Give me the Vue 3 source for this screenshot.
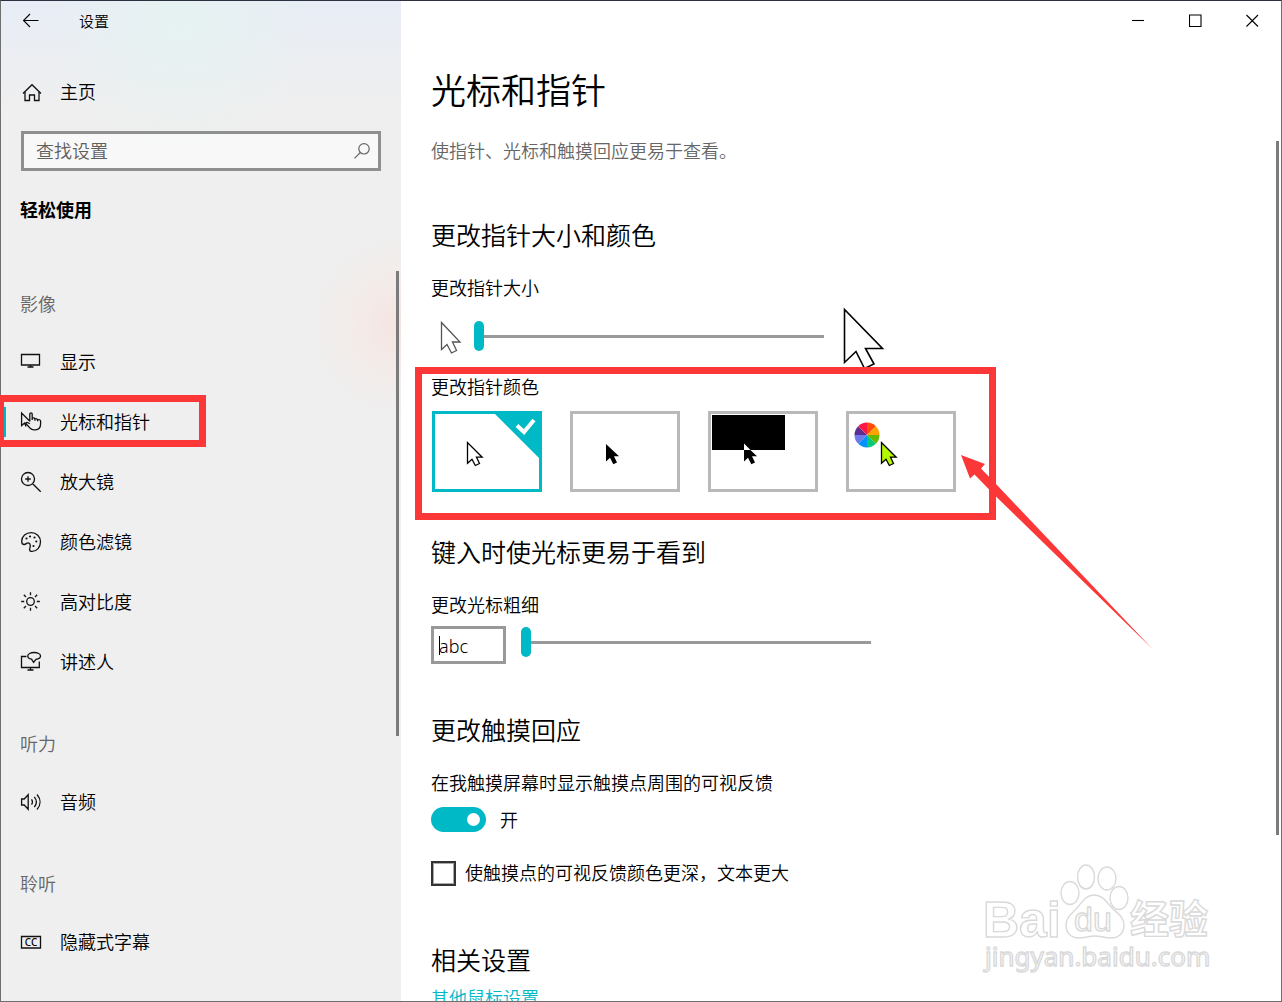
<script setup>
import { ref } from 'vue';

const search = ref('')
const active = ref('cursor')
const pointerSize = ref(0)
const pointerColor = ref('white')
const caretWidth = ref(0)
const sample = ref('abc')
const touchFeedback = ref(true)
const darkerFeedback = ref(false)

const groups = [
    {
        title: '影像',
        items: [
            { id: 'display', text: '显示' },
            { id: 'cursor', text: '光标和指针' },
            { id: 'magnifier', text: '放大镜' },
            { id: 'filters', text: '颜色滤镜' },
            { id: 'contrast', text: '高对比度' },
            { id: 'narrator', text: '讲述人' }
        ]
    },
    {
        title: '听力',
        items: [{ id: 'audio', text: '音频' }]
    },
    {
        title: '聆听',
        items: [{ id: 'captions', text: '隐藏式字幕' }]
    }
]

const icons = {
    display: 'M1.5 3.5h18v10.5h-18z M10.5 14v2 M7.5 16h6',
    cursor: 'M6 15.5 4.6 12 1.6 14.6V2l8 8 M9.8 10.5V3a1.2 1.2 0 0 1 2.4 0V9 M12.2 7.3c1-.8 2.6-.5 2.7.7v1.7 M14.9 8c1-.6 2.6-.3 2.7 1v1.2 M17.6 8.8c1.3-.6 2.9 0 3 1.3v3c0 3.2-1.8 5.7-5.2 5.7h-1.6c-1.5 0-2.6-.6-3.6-1.6L5.7 12.4c.8-1.4 2.6-1.1 4.1.5',
    magnifier: 'M14.5 8a6.5 6.5 0 1 1-13 0 6.5 6.5 0 0 1 13 0z M12.7 12.7l8 8 M8 5.2v5.6 M5.2 8h5.6',
    filters: 'M1.7 10.5C1.7 5.3 6 1.6 11.2 1.6s9.3 4 9.3 9.2c0 5.3-3.6 9.6-8.5 9.6-1.8 0-2.9-1-2.3-2.6.8-2.3 1.2-5.6-1.5-5.9-1.6-.2-2.2 1.6-4 1.6-1.7 0-2.5-1.3-2.5-3z',
    contrast: 'M14.3 10.5a3.8 3.8 0 1 1-7.6 0 3.8 3.8 0 0 1 7.6 0z M10.5 1.2v3 M10.5 16.8v3 M1.2 10.5h3 M16.8 10.5h3 M3.8 3.8 6 6 M15 15l2.2 2.2 M17.2 3.8 15 6 M6 15l-2.2 2.2',
    narrator: 'M6.5 5.5h-5v11h17.8v-6 M10.5 16.5v2.5 M7.5 19h6 M11.5 8.2C9.3 7.8 7.8 6.6 7.8 5c0-2 2.8-3.5 6.3-3.5s6.4 1.5 6.4 3.5c0 1.7-1.9 3-4.6 3.4l-2.3 3z',
    audio: 'M1.6 8h2.6l4-4.3v14.6l-4-4.3H1.6z M11.5 8.3c1.2 1.7 1.2 3.7 0 5.4 M14.3 5.8c2.6 3.2 2.6 7.2 0 10.4 M17 3.5c4 4.6 4 10.4 0 15',
    captions: 'M1.5 5.5h19v11.5h-19z'
}

// centres of the paint wells on the palette
const wells = [[6.5, 7.5], [10, 5.5], [14.5, 6.5], [16.3, 10.5], [13.5, 15]]

const colors = [
    { id: 'white', text: '白色' },
    { id: 'black', text: '黑色' },
    { id: 'inverted', text: '反转' },
    { id: 'custom', text: '自定义' }
]

const outlinePointer = 'M32.5 28.5V49.2L37 45.2l3.3 6.3 4.2-2-3-6.3h5.7z'
const solidPointer = 'M33 30v17.5l4-3.8 3.3 6.5 3.7-1.7-3-6.2h5z'

const wheel = ['#ff4b05', '#ffa200', '#66b800', '#00ca76', '#0094fb', '#7179ea', '#5d2e91', '#fc1745']

function slice(i) {
    const point = n => {
        const a = n * Math.PI / 4
        return `${18 + 12.5 * Math.sin(a)} ${21 - 12.5 * Math.cos(a)}`
    }
    return `M18 21L${point(i)}A12.5 12.5 0 0 1 ${point(i + 1)}z`
}
</script>

<template>
    <div class="window">
        <aside class="sidebar">
            <header class="titlebar">
                <button class="back" aria-label="返回">
                    <svg width="16" height="16" viewBox="0 0 16 16"><path d="M.5 7.5h15 M7 1 .5 7.5 7 14" /></svg>
                </button>
                <span>设置</span>
            </header>

            <a class="nav-item home" href="#home">
                <svg width="22" height="22" viewBox="0 0 22 22">
                    <path d="M3 12.5 12 3.7l9 8.8 M5 11v8.5h4.5V14h5v5.5H19V11" />
                </svg>
                <span>主页</span>
            </a>

            <div class="search">
                <input v-model="search" type="text" placeholder="查找设置" aria-label="查找设置" />
                <svg width="16" height="16" viewBox="0 0 16 16">
                    <circle cx="10" cy="5.8" r="5.2" /><path d="M6.3 9.5.5 15.3" />
                </svg>
            </div>

            <h2 class="category">轻松使用</h2>

            <nav class="nav">
                <section v-for="group in groups" :key="group.title">
                    <h3>{{ group.title }}</h3>
                    <a
                        v-for="item in group.items"
                        :key="item.id"
                        class="nav-item"
                        :class="{ active: item.id === active }"
                        :href="'#' + item.id"
                        @click="active = item.id"
                    >
                        <svg width="22" height="22" viewBox="0 0 22 22">
                            <path :d="icons[item.id]" />
                            <template v-if="item.id === 'filters'">
                                <circle v-for="w in wells" :key="w[0]" class="well" :cx="w[0]" :cy="w[1]" r="1.1" />
                            </template>
                            <text v-if="item.id === 'captions'" x="11" y="15" text-anchor="middle">CC</text>
                        </svg>
                        <span>{{ item.text }}</span>
                        <i v-if="item.id === 'cursor'" class="mark mark-nav"></i>
                    </a>
                </section>
                <i class="scroll-thumb"></i>
            </nav>
        </aside>

        <main class="content">
            <header class="titlebar controls">
                <button aria-label="最小化"><svg width="13" height="13" viewBox="0 0 13 13"><path d="M0 6.5h12" /></svg></button>
                <button aria-label="最大化"><svg width="13" height="13" viewBox="0 0 13 13"><path d="M.5 1h11.5v11.5H.5z" /></svg></button>
                <button aria-label="关闭"><svg width="13" height="13" viewBox="0 0 13 13"><path d="M.5 1l11.5 11.5 M12 1 .5 12.5" /></svg></button>
            </header>

            <h1>光标和指针</h1>
            <p class="intro">使指针、光标和触摸回应更易于查看。</p>

            <section>
                <h2>更改指针大小和颜色</h2>
                <label class="caption" for="pointer-size">更改指针大小</label>
                <div class="size-row">
                    <svg class="small-pointer" width="22" height="38" viewBox="0 0 22 38">
                        <path d="M1.5 5.5v27l5.5-5 4.5 8.5 5-2.5-4-8.5h7.5z" />
                    </svg>
                    <input id="pointer-size" v-model="pointerSize" type="range" min="0" max="14" />
                    <svg class="big-pointer" width="42" height="68" viewBox="0 0 42 68">
                        <path d="M1.5 7.500v53l11.500-11 8.500 17 9.500-4.500-8.500-15.500h17z" />
                    </svg>
                </div>

                <div class="color-block">
                    <p id="color-label" class="caption">更改指针颜色</p>
                    <div class="swatches" role="radiogroup" aria-labelledby="color-label">
                        <label v-for="c in colors" :key="c.id" class="swatch" :class="{ selected: c.id === pointerColor }">
                            <input v-model="pointerColor" type="radio" name="color" :value="c.id" :aria-label="c.text" />
                            <svg width="104" height="75" viewBox="0 0 104 75">
                                <path v-if="c.id === 'white'" :d="outlinePointer" fill="#fff" stroke="#000" stroke-width="1.3" />
                                <path v-if="c.id === 'black'" :d="solidPointer" />
                                <template v-if="c.id === 'inverted'">
                                    <rect x="1" y="1" width="73" height="35" />
                                    <path :d="solidPointer" />
                                    <path d="M33 29.5V36h6.5z" fill="#fff" />
                                </template>
                                <template v-if="c.id === 'custom'">
                                    <path v-for="(fill, i) in wheel" :key="fill" :d="slice(i)" :fill="fill" />
                                    <path :d="outlinePointer" fill="#b5f800" stroke="#000" stroke-width="1.3" />
                                </template>
                                <template v-if="c.id === pointerColor">
                                    <path d="M60 0h44v44z" fill="#00b9c6" />
                                    <path d="M82 11.5l7 6.5L99 6" fill="none" stroke="#fff" stroke-width="4" />
                                </template>
                            </svg>
                        </label>
                    </div>
                    <i class="mark mark-colors"></i>
                    <svg class="arrow" width="194" height="196" viewBox="0 0 194 196">
                        <path d="M1 1l24 9-4 4.5 15 15.5L193 195.5 36 42.5 14.5 20.5 10 24.5z" />
                    </svg>
                </div>
            </section>

            <section class="caret-section">
                <h2>键入时使光标更易于看到</h2>
                <label class="caption" for="caret-width">更改光标粗细</label>
                <div class="caret-row">
                    <div class="sample">
                        <input v-model="sample" type="text" aria-label="预览" />
                        <i></i>
                    </div>
                    <input id="caret-width" v-model="caretWidth" type="range" min="0" max="19" />
                </div>
            </section>

            <section class="touch-section">
                <h2>更改触摸回应</h2>
                <label class="caption" for="touch">在我触摸屏幕时显示触摸点周围的可视反馈</label>
                <div class="toggle-row">
                    <input id="touch" v-model="touchFeedback" class="toggle" type="checkbox" role="switch" />
                    <span>{{ touchFeedback ? '开' : '关' }}</span>
                </div>
                <label class="check-row">
                    <input v-model="darkerFeedback" class="check" type="checkbox" />
                    <span>使触摸点的可视反馈颜色更深，文本更大</span>
                </label>
            </section>

            <section class="related">
                <h2>相关设置</h2>
                <a href="#mouse">其他鼠标设置</a>
            </section>

            <i class="scroll-thumb"></i>

            <svg class="watermark" width="236" height="120" viewBox="0 0 236 120">
                <text x="3" y="77" class="wm-bai">Bai</text>
                <ellipse cx="90" cy="33" rx="9" ry="11.5" />
                <ellipse cx="106" cy="17" rx="8.5" ry="12" />
                <ellipse cx="127" cy="18.5" rx="9" ry="11.5" />
                <ellipse cx="139" cy="38" rx="9" ry="11.5" />
                <path d="M114 35c9 0 13 8 19 14 6 5 11 9 11 16 0 8-5 13-13 13-6 0-10-2-16-2s-10 2-16 2c-8 0-13-5-13-13 0-7 5-11 10-16 6-6 9-14 18-14z" />
                <text x="94" y="71" class="wm-du">du</text>
                <text x="150" y="73" class="wm-cn">经验</text>
                <text x="5" y="106" class="wm-url">jingyan.baidu.com</text>
            </svg>
        </main>
    </div>
</template>

<style>
body {
    margin: 0;
    background: #fff;
}
</style>

<style scoped>
* {
    box-sizing: border-box;
}

.window {
    position: relative;
    display: grid;
    grid-template-columns: 401px 1fr;
    height: 100vh;
    overflow: hidden;
    color: #000;
    background: #fff;
    font-family: "Noto Sans", "Noto Sans CJK SC", sans-serif;
    font-size: 18px;
    font-weight: 350;
    line-height: 24px;
}

.window::after {
    content: "";
    position: absolute;
    inset: 0;
    border: 1px solid #6f6f6f;
    border-top-color: #2c3040;
    pointer-events: none;
}

h1, h2, h3, p {
    margin: 0;
    font-weight: 350;
}

button {
    padding: 0;
    border: none;
    background: none;
}

svg {
    display: block;
    flex: none;
}

.titlebar {
    display: flex;
    align-items: center;
    height: 41px;
    font-size: 15px;
}

.titlebar path {
    fill: none;
    stroke: #000;
    stroke-width: 1.1;
}

/* sidebar */
.sidebar {
    display: flex;
    flex-direction: column;
    min-height: 0;
    background:
        radial-gradient(circle at 400px 325px, #f5e3e1 0, rgba(245, 234, 230, 0.7) 45px, rgba(239, 239, 239, 0) 90px),
        radial-gradient(circle at 180px 20px, rgba(230, 243, 241, 0.9), rgba(236, 240, 241, 0) 130px),
        linear-gradient(#e8edf6 0, #efefef 110px);
}

.back {
    width: 16px;
    margin: 0 40px 0 23px;
}

.nav-item {
    position: relative;
    display: flex;
    align-items: center;
    gap: 18px;
    height: 60px;
    padding-left: 20px;
    color: #000;
    text-decoration: none;
}

.nav-item path {
    fill: none;
    stroke: #111;
    stroke-width: 1.3;
}

.nav-item text {
    font-family: "Noto Sans", sans-serif;
    font-size: 10px;
    font-weight: 500;
}

.well {
    fill: #111;
}

.home {
    margin-top: 21px;
}

.search {
    display: flex;
    align-items: center;
    height: 40px;
    margin: 9px 20px 0 21px;
    padding: 0 8px 0 12px;
    border: 3px solid #8f8f8f;
    background: rgba(255, 255, 255, 0.55);
}

.search input {
    flex: 1;
    min-width: 0;
    padding: 0;
    border: none;
    outline: none;
    background: none;
    font: inherit;
}

.search input::placeholder {
    color: #5f5f5f;
    opacity: 1;
}

.search svg {
    fill: none;
    stroke: #666;
    stroke-width: 1.2;
}

.category {
    margin: 19px 0 22px 20px;
    font-size: 18px;
    font-weight: 700;
    line-height: 40px;
}

.nav {
    position: relative;
    flex: 1;
    min-height: 0;
}

.nav h3 {
    padding: 24px 0 0 20px;
    color: #666;
    font-size: 18px;
    line-height: 56px;
}

.active::before {
    content: "";
    position: absolute;
    left: 4px;
    width: 2px;
    height: 30px;
    background: #00b9c6;
}

.scroll-thumb {
    position: absolute;
    right: 3px;
    width: 3px;
    background: #7b7b7b;
}

.nav .scroll-thumb {
    top: 19px;
    right: 2px;
    height: 465px;
}

/* red marker frames */
.mark {
    position: absolute;
    z-index: 1;
    border: 7px solid #fb3837;
    pointer-events: none;
}

.mark-nav {
    top: 3px;
    left: 0;
    width: 206px;
    height: 52px;
    border-left-width: 4px;
}

/* content */
.content {
    position: relative;
    min-width: 0;
    padding-left: 30px;
    overflow: hidden;
}

.controls {
    justify-content: flex-end;
    padding-right: 1px;
}

.controls button {
    display: grid;
    place-items: center;
    width: 57px;
    height: 41px;
}

h1 {
    margin-top: 26px;
    font-size: 35px;
    line-height: 48px;
}

.intro {
    margin: 24px 0 54px;
    color: #666;
}

.content h2 {
    margin-bottom: 23px;
    font-size: 25px;
    line-height: 36px;
}

.caption {
    display: block;
}

.size-row {
    display: flex;
    align-items: center;
    height: 60px;
    margin: 6px 0 9px;
    padding-left: 9px;
}

.size-row path {
    fill: #fff;
    stroke: #000;
    stroke-width: 1.6;
}

.small-pointer {
    margin-right: 12px;
}

.size-row .small-pointer path {
    stroke: #555;
    stroke-width: 1.3;
}

.big-pointer {
    margin-left: 19px;
}

input[type="range"] {
    appearance: none;
    width: 350px;
    height: 32px;
    margin: 0;
    background: linear-gradient(#999, #999) center / 100% 3px no-repeat;
}

input[type="range"]::-webkit-slider-thumb {
    appearance: none;
    width: 10px;
    height: 30px;
    border-radius: 5px;
    background: #00b9c6;
}

.color-block {
    position: relative;
}

.swatches {
    display: flex;
    gap: 28px;
    margin-top: 12px;
    padding-left: 1px;
}

.swatch {
    border: 3px solid #b9b9b9;
}

.swatch input {
    position: absolute;
    opacity: 0;
}

.selected {
    border-color: #00b9c6;
}

.mark-colors {
    top: -8px;
    left: -16px;
    width: 581px;
    height: 153px;
}

.arrow {
    position: absolute;
    z-index: 1;
    top: 79px;
    left: 529px;
    fill: #fb3837;
    pointer-events: none;
}

.caret-section {
    margin-top: 42px;
}

.caret-row {
    display: flex;
    align-items: flex-start;
    gap: 15px;
    margin-top: 9px;
}

.sample {
    position: relative;
    width: 75px;
    height: 38px;
    border: 3px solid #999;
}

.sample input {
    width: 100%;
    height: 100%;
    padding: 2px 0 0 5px;
    border: none;
    outline: none;
    background: none;
    font: inherit;
}

.sample i {
    position: absolute;
    top: 7px;
    left: 5px;
    width: 1px;
    height: 19px;
    background: #000;
}

.touch-section {
    margin-top: 48px;
}

.toggle-row {
    display: flex;
    align-items: center;
    gap: 14px;
    height: 25px;
    margin: 12px 0 28px;
}

.toggle {
    appearance: none;
    display: flex;
    align-items: center;
    width: 55px;
    height: 25px;
    margin: 0;
    padding: 0 6px;
    border-radius: 13px;
    background: #999;
}

.toggle:checked {
    justify-content: flex-end;
    background: #00b9c6;
}

.toggle::before {
    content: "";
    width: 13px;
    height: 13px;
    border-radius: 50%;
    background: #fff;
}

.check-row {
    display: flex;
    align-items: center;
    gap: 9px;
    height: 26px;
}

.check {
    appearance: none;
    width: 25px;
    height: 25px;
    margin: 0;
    border: 2px solid #333;
    outline: 1px solid #aaa;
    outline-offset: -3px;
}

.check:checked {
    background: #00b9c6;
}

.related {
    margin-top: 56px;
}

.content .related h2 {
    margin-bottom: 8px;
}

.related a {
    color: #00b9c6;
    text-decoration: none;
}

.content > .scroll-thumb {
    top: 141px;
    height: 694px;
}

.watermark {
    position: absolute;
    right: 66px;
    bottom: 22px;
    fill: #fff;
    stroke: #d9d9d9;
    stroke-width: 1.4;
    pointer-events: none;
}

.watermark text {
    font-family: "Liberation Sans", "Noto Sans CJK SC", sans-serif;
    font-weight: 700;
}

.watermark .wm-bai {
    font-size: 50px;
}

.watermark .wm-du {
    font-size: 34px;
    font-weight: 400;
}

.watermark .wm-cn {
    font-size: 39px;
}

.watermark .wm-url {
    font-family: "Noto Sans", sans-serif;
    font-size: 26px;
    font-weight: 400;
}
</style>
